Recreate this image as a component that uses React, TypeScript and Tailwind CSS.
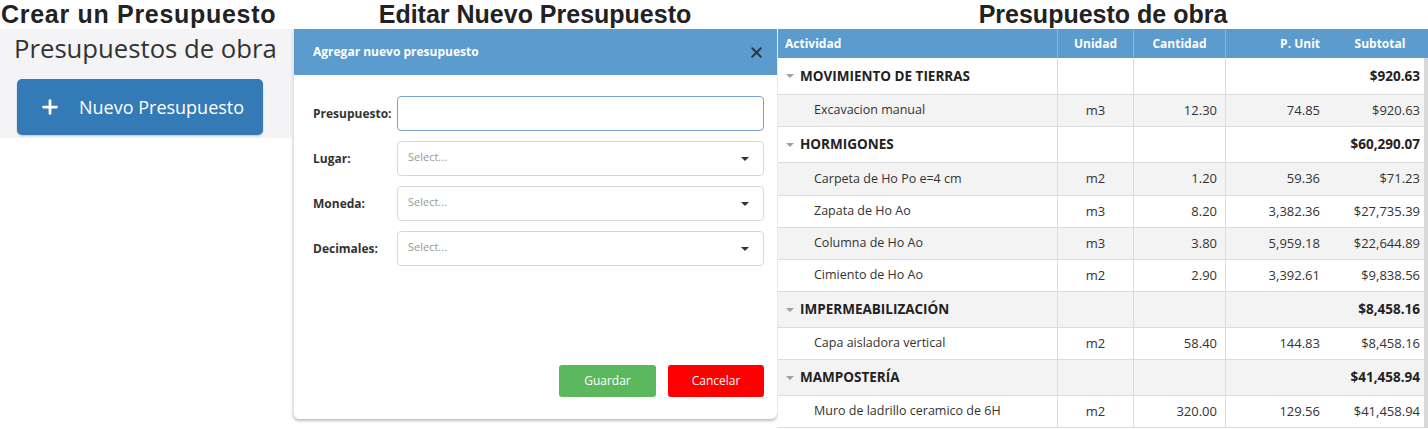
import React from 'react';
import { X, Plus } from 'lucide-react';

type Row =
  | { kind: 'group'; name: string; subtotal: string }
  | { kind: 'item'; name: string; unit: string; qty: string; price: string; subtotal: string };

const rows: Row[] = [
  { kind: 'group', name: 'MOVIMIENTO DE TIERRAS', subtotal: '$920.63' },
  { kind: 'item', name: 'Excavacion manual', unit: 'm3', qty: '12.30', price: '74.85', subtotal: '$920.63' },
  { kind: 'group', name: 'HORMIGONES', subtotal: '$60,290.07' },
  { kind: 'item', name: 'Carpeta de Ho Po e=4 cm', unit: 'm2', qty: '1.20', price: '59.36', subtotal: '$71.23' },
  { kind: 'item', name: 'Zapata de Ho Ao', unit: 'm3', qty: '8.20', price: '3,382.36', subtotal: '$27,735.39' },
  { kind: 'item', name: 'Columna de Ho Ao', unit: 'm3', qty: '3.80', price: '5,959.18', subtotal: '$22,644.89' },
  { kind: 'item', name: 'Cimiento de Ho Ao', unit: 'm2', qty: '2.90', price: '3,392.61', subtotal: '$9,838.56' },
  { kind: 'group', name: 'IMPERMEABILIZACIÓN', subtotal: '$8,458.16' },
  { kind: 'item', name: 'Capa aisladora vertical', unit: 'm2', qty: '58.40', price: '144.83', subtotal: '$8,458.16' },
  { kind: 'group', name: 'MAMPOSTERÍA', subtotal: '$41,458.94' },
  { kind: 'item', name: 'Muro de ladrillo ceramico de 6H', unit: 'm2', qty: '320.00', price: '129.56', subtotal: '$41,458.94' },
];

const Title: React.FC<{ children: React.ReactNode; center?: boolean }> = ({ children, center }) => (
  <h1
    className={`h-[29px] text-[25px] leading-[29px] font-bold text-[#222] font-['Liberation_Sans',Arial,sans-serif] whitespace-nowrap ${
      center ? 'text-center' : 'pl-[1px] tracking-[0.7px]'
    }`}
  >
    {children}
  </h1>
);

const SelectField: React.FC<{ label: string }> = ({ label }) => (
  <div className="flex items-center h-[35px] mb-[10px]">
    <label className="w-[84px] text-[12px] font-bold text-[#333]">{label}</label>
    <div className="flex-1 h-[35px] border border-[#d9d9d9] rounded-[4px] bg-white flex items-center justify-between px-[10px]">
      <span className="text-[11px] text-[#999] -mt-[3px]">Select...</span>
      <span className="w-0 h-0 border-l-[4px] border-r-[4px] border-t-[4px] border-l-transparent border-r-transparent border-t-[#333] mr-[4px]" />
    </div>
  </div>
);

export default function App() {
  return (
    <div className="flex w-[1428px] h-[429px] bg-white overflow-hidden font-['Open_Sans','Noto_Sans',sans-serif]">
      {/* Crear */}
      <div className="w-[293px] shrink-0">
        <Title>Crear un Presupuesto</Title>
        <div className="w-[292px] h-[109px] bg-[#f4f4f6] pt-[2px] pl-[14px]">
          <div className="text-[25.7px] leading-[36px] text-[#333] whitespace-nowrap">Presupuestos de obra</div>
          <button className="mt-[12px] ml-[3px] w-[246px] h-[56px] bg-[#337ab7] rounded-[5px] flex items-center text-white pl-[22px] shadow-[0_1px_2px_rgba(0,0,0,0.2)]">
            <Plus size={22} strokeWidth={3} />
            <span className="ml-[18px] text-[18px]">Nuevo Presupuesto</span>
          </button>
        </div>
      </div>

      {/* Editar */}
      <div className="w-[484px] shrink-0">
        <Title center>Editar Nuevo Presupuesto</Title>
        <div className="h-[390px] border-l border-[#e2e2e2] rounded-b-[6px] shadow-[0_2px_3px_rgba(0,0,0,0.25)] bg-white flex flex-col">
          <div className="h-[46px] bg-[#5b9bcd] flex items-center justify-between pl-[19px] pr-[12px]">
            <span className="text-[12px] font-bold text-white">Agregar nuevo presupuesto</span>
            <X size={17} strokeWidth={2.6} className="text-[#333]" />
          </div>
          <div className="px-[19px] pr-[13px] pt-[21px] flex-1 flex flex-col">
            <div className="flex items-center h-[35px] mb-[10px]">
              <label className="w-[84px] text-[12px] font-bold text-[#333]">Presupuesto:</label>
              <div className="flex-1 h-[35px] border border-[#7aa2cc] rounded-[4px] bg-white" />
            </div>
            <SelectField label="Lugar:" />
            <SelectField label="Moneda:" />
            <SelectField label="Decimales:" />
            <div className="flex justify-end gap-[12px] mt-[89px]">
              <button className="w-[97px] h-[32px] bg-[#5cb85c] rounded-[3px] text-white text-[12px]">Guardar</button>
              <button className="w-[96px] h-[32px] bg-[#ff0000] rounded-[3px] text-white text-[12px]">Cancelar</button>
            </div>
          </div>
        </div>
      </div>

      {/* Tabla */}
      <div className="flex-1 pl-[1px]">
        <Title center>Presupuesto de obra</Title>
        <div className="flex h-[29px] bg-[#5b9bcd] text-white text-[12px] font-bold items-center">
          <div className="w-[280px] pl-[7px] h-full flex items-center border-r border-[#8bb8dd]">Actividad</div>
          <div className="w-[76px] h-full flex items-center justify-center border-r border-[#8bb8dd]">Unidad</div>
          <div className="w-[92px] h-full flex items-center justify-center border-r border-[#8bb8dd]">Cantidad</div>
          <div className="w-[102px] h-full flex items-center justify-end pr-[8px]">P. Unit</div>
          <div className="flex-1 h-full flex items-center justify-center pl-[4px]">Subtotal</div>
        </div>
        <div className="flex">
          <div className="flex-1">
            {rows.map((r, i) => {
              const bg = i % 2 === 0 ? 'bg-white' : 'bg-[#f3f3f3]';
              if (r.kind === 'group') {
                return (
                  <div
                    key={i}
                    className={`flex ${i === 0 ? 'h-[37px]' : 'h-[36px]'} border-b border-[#dcdcdc] text-[13.5px] font-bold text-[#222] ${bg}`}
                  >
                    <div className="w-[280px] pl-[8px] flex items-center border-r border-[#dcdcdc] whitespace-nowrap">
                      <span className="w-0 h-0 border-l-[4px] border-r-[4px] border-t-[4px] border-l-transparent border-r-transparent border-t-[#a0a0a0] mr-[6px]" />
                      {r.name}
                    </div>
                    <div className="w-[76px] border-r border-[#dcdcdc]" />
                    <div className="w-[92px] border-r border-[#dcdcdc]" />
                    <div className="flex-1 flex items-center justify-end pr-[4px]">{r.subtotal}</div>
                  </div>
                );
              }
              return (
                <div key={i} className={`flex ${i === 3 ? 'h-[33px]' : 'h-[32px]'} border-b border-[#dcdcdc] text-[13px] text-[#333] ${bg}`}>
                  <div className="w-[280px] pl-[36px] flex items-center border-r border-[#dcdcdc] text-[12.5px] whitespace-nowrap">{r.name}</div>
                  <div className="w-[76px] flex items-center justify-center border-r border-[#dcdcdc]">{r.unit}</div>
                  <div className="w-[92px] flex items-center justify-end pr-[8px] border-r border-[#dcdcdc]">{r.qty}</div>
                  <div className="w-[102px] flex items-center justify-end pr-[8px]">{r.price}</div>
                  <div className="flex-1 flex items-center justify-end pr-[4px]">{r.subtotal}</div>
                </div>
              );
            })}
          </div>
          <div className="w-[4px] bg-[#d8d8d8]" />
        </div>
      </div>
    </div>
  );
}
